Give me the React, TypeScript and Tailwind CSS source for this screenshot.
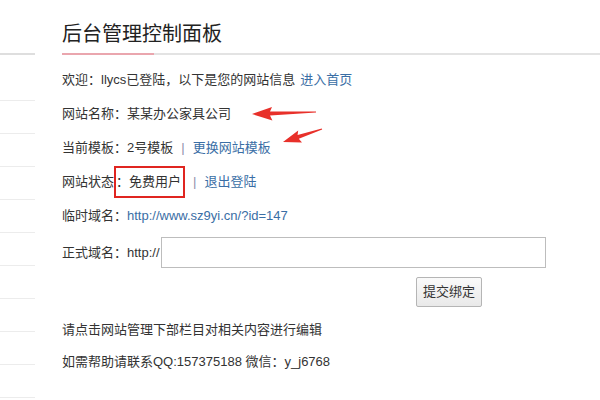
const FONT = "font-['Liberation_Sans','Noto_Sans_CJK_SC',sans-serif]";

function Sidebar() {
  const rows = Array.from({ length: 9 });
  return (
    <div className="w-[35px] shrink-0 flex flex-col">
      <div className="h-[55px] border-b-2 border-[#dedede]" />
      <div className="h-[46px] border-b border-[#ececec]" />
      {rows.map((_, i) => (
        <div key={i} className="h-[33px] border-b border-[#ececec]" />
      ))}
    </div>
  );
}

function Row({ children, className = "" }: { children: React.ReactNode; className?: string }) {
  return <div className={`h-[34px] flex items-center ${className}`}>{children}</div>;
}

function Sep() {
  return <span className="mx-[8px] text-[#8f8fab]">|</span>;
}

function Arrows() {
  return (
    <svg
      className="absolute left-0 top-0 pointer-events-none"
      width="600"
      height="400"
      viewBox="0 0 600 400"
    >
      <polygon
        fill="#e8302a"
        points="252,114 272,107 270,111.6 316,111.4 316,112.6 270,115.4 272.4,120.5"
      />
      <polygon
        fill="#e8302a"
        points="283,142 298.2,130.6 297.6,135 321.8,128.5 322.2,129.5 298.8,138.8 302,142.5"
      />
    </svg>
  );
}

export default function App() {
  return (
    <div className={`relative w-[600px] h-[400px] overflow-hidden bg-white text-[13px] text-[#333] ${FONT}`}>
      <div className="flex">
        <Sidebar />
        <div className="flex-1 pl-[27px]">
          <div className="h-[53px] pt-[21px]">
            <h1 className="text-[20px] leading-[26px] text-[#222]">后台管理控制面板</h1>
          </div>
          <div className="flex h-[2px]">
            <div className="w-[92px] bg-[#eaa6ae]" />
            <div className="flex-1 bg-[#e3e3e3]" />
          </div>

          <Row className="mt-[8px]">
            <span>欢迎：llycs已登陆，以下是您的网站信息</span>
            <a className="ml-[5px] text-[#3a6ea5]">进入首页</a>
          </Row>
          <Row>网站名称：某某办公家具公司</Row>
          <Row>
            <span>当前模板：2号模板</span>
            <Sep />
            <a className="text-[#3a6ea5]">更换网站模板</a>
          </Row>
          <Row>
            <span>网站状态</span>
            <span className="h-[32px] flex items-center border-2 border-[#e02520] pr-[2px]">：免费用户</span>
            <Sep />
            <a className="text-[#3a6ea5]">退出登陆</a>
          </Row>
          <Row>
            <span>临时域名：</span>
            <a className="text-[#3a6ea5]">http://www.sz9yi.cn/?id=147</a>
          </Row>
          <div className="mt-[4px] h-[31px] flex items-center">
            <span>正式域名：http://</span>
            <input
              type="text"
              className="ml-[1px] w-[385px] h-[31px] border border-[#bdbdbd] outline-none"
            />
          </div>
          <div className="mt-[9px] pl-[354px]">
            <button className="w-[66px] h-[30px] rounded-[2px] border border-[#b5b5b5] bg-gradient-to-b from-[#fafafa] to-[#e9e9e9] text-[13px] text-[#333]">
              提交绑定
            </button>
          </div>
          <Row className="mt-[6px]">请点击网站管理下部栏目对相关内容进行编辑</Row>
          <div className="h-[30px] flex items-center">如需帮助请联系QQ:157375188 微信：y_j6768</div>
        </div>
      </div>
      <Arrows />
    </div>
  );
}
